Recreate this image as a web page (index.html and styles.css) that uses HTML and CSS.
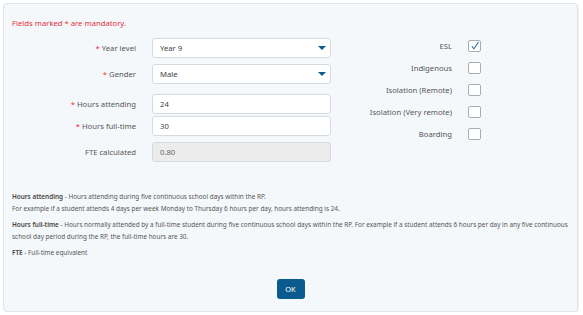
FILE: index.html
```html
<!DOCTYPE html>
<html>
<head>
<meta charset="utf-8">
<link rel="stylesheet" href="styles.css">
</head>
<body>
<div class="panel">
  <p class="mandatory">Fields marked * are mandatory.</p>
  <div class="form">
    <div class="fields">
      <label class="lbl"><span class="req">*</span> Year level</label>
      <div class="select"><span>Year 9</span><span class="caret"></span></div>
      <label class="lbl"><span class="req">*</span> Gender</label>
      <div class="select"><span>Male</span><span class="caret"></span></div>
      <label class="lbl spaced"><span class="req">*</span> Hours attending</label>
      <div class="input spaced">24</div>
      <label class="lbl"><span class="req">*</span> Hours full-time</label>
      <div class="input">30</div>
      <label class="lbl">FTE calculated</label>
      <div class="input disabled">0.80</div>
    </div>
    <div class="checks">
      <span class="clbl">ESL</span>
      <span class="box"><svg width="10" height="10" viewBox="0 0 10 10"><path d="M2.2 5.6 L4 7.8 L8.2 1.4" fill="none" stroke="#2f7ab8" stroke-width="1.1" stroke-linecap="round" stroke-linejoin="round"/></svg></span>
      <span class="clbl">Indigenous</span>
      <span class="box"></span>
      <span class="clbl">Isolation (Remote)</span>
      <span class="box"></span>
      <span class="clbl">Isolation (Very remote)</span>
      <span class="box"></span>
      <span class="clbl">Boarding</span>
      <span class="box"></span>
    </div>
  </div>
  <div class="notes">
    <p><b>Hours attending</b> - Hours attending during five continuous school days within the RP.<br>For example if a student attends 4 days per week Monday to Thursday 6 hours per day, hours attending is 24.</p>
    <p><b>Hours full-time</b> - Hours normally attended by a full-time student during five continuous school days within the RP. For example if a student attends 6 hours per day in any five continuous<br>school day period during the RP, the full-time hours are 30.</p>
    <p><b>FTE</b> - Full-time equivalent</p>
  </div>
  <div class="actions"><button class="ok">OK</button></div>
</div>
</body>
</html>
```
FILE: styles.css
```css
* { box-sizing: border-box; }
html, body { margin: 0; padding: 0; background: #fff; }
body { font-family: "Noto Sans", "Open Sans", sans-serif; color: #555; }
.panel {
  margin: 3px 5px 0 3px;
  height: 309px;
  background: #f5f8fb;
  border: 1px solid #dfe4e9;
  border-radius: 4px;
  box-shadow: 1px 1px 1px rgba(0,0,0,0.06);
  padding: 14px 8px 0 8px;
}
.mandatory { margin: 0; font-size: 7.7px; line-height: 10px; color: #e5303c; }
.form { display: flex; margin-top: 10px; }
.fields {
  display: grid;
  grid-template-columns: 124px 179px;
  column-gap: 16px;
  row-gap: 6px;
  grid-auto-rows: 20px;
  align-items: center;
}
.lbl { text-align: right; font-size: 7.7px; color: #555; }
.req { color: #e5303c; }
.spaced { margin-top: 7px; }
.select, .input {
  height: 20px;
  background: #fff;
  border: 1px solid #d6dbe0;
  border-radius: 3px;
  font-size: 7.7px;
  color: #444;
  padding: 0 4px 0 7px;
  display: flex;
  align-items: center;
  justify-content: space-between;
}
.disabled { background: #ececec; color: #666; }
.caret {
  width: 0; height: 0;
  border-left: 4px solid transparent;
  border-right: 4px solid transparent;
  border-top: 4.5px solid #0d5a8e;
}
.checks {
  margin-left: auto;
  margin-right: 88px;
  margin-top: 2px;
  display: grid;
  grid-template-columns: auto 13px;
  column-gap: 16px;
  grid-auto-rows: 12px;
  row-gap: 10px;
  align-items: center;
  align-content: start;
}
.clbl { text-align: right; font-size: 7.7px; color: #555; }
.box {
  width: 13px; height: 12px;
  border: 1px solid #a9aeb3;
  border-radius: 2px;
  background: #fff;
  display: flex; align-items: center; justify-content: center;
}
.notes { margin-top: 29px; font-size: 6.4px; line-height: 12px; color: #555; }
.notes p { margin: 0 0 4px 0; }
.notes b { font-weight: 600; color: #444; }
.actions { display: flex; justify-content: center; margin-top: 20px; }
.ok {
  width: 28px; height: 20px;
  background: #0b5b8e;
  color: #fff;
  border: none;
  border-radius: 3px;
  font-family: "Noto Sans", sans-serif;
  font-size: 7.5px;
  padding: 0;
}
```
